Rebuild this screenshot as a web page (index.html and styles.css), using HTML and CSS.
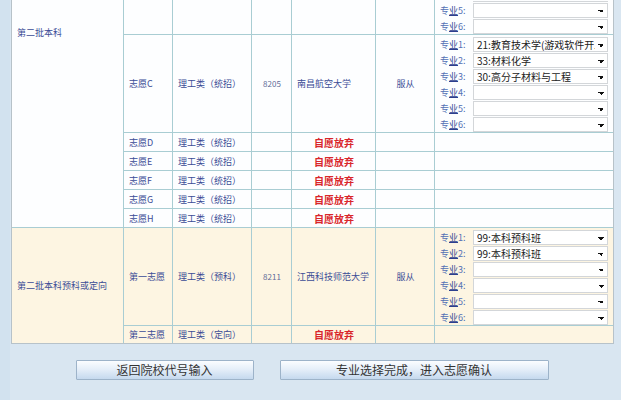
FILE: index.html
```html
<!DOCTYPE html>
<html lang="zh-CN">
<head>
    <meta charset="UTF-8">
    <meta name="viewport" content="width=device-width, initial-scale=1.0">
    <title>专业选择</title>
    <link rel="stylesheet" href="styles.css">
</head>
<body>
    <div class="page">
        <table class="grid">
            <colgroup>
                <col class="c-batch">
                <col class="c-pick">
                <col class="c-kind">
                <col class="c-code">
                <col class="c-school">
                <col class="c-obey">
                <col class="c-majors">
            </colgroup>
            <tr class="cut">
                <td class="batch top" rowspan="7">第二批本科</td>
                <td></td>
                <td></td>
                <td></td>
                <td></td>
                <td></td>
                <td class="majors">
                    <div class="clip">
                        <div class="major"><span class="tag">专<u>业</u>4:</span><select class="pick"><option></option></select></div>
                        <div class="major"><span class="tag">专<u>业</u>5:</span><select class="pick"><option></option></select></div>
                        <div class="major"><span class="tag">专<u>业</u>6:</span><select class="pick"><option></option></select></div>
                    </div>
                </td>
            </tr>
            <tr class="tall">
                <td>志愿C</td>
                <td>理工类（统招）</td>
                <td class="code">8205</td>
                <td>南昌航空大学</td>
                <td class="mid">服从</td>
                <td class="majors">
                    <div class="major"><span class="tag">专<u>业</u>1:</span><select class="pick"><option>21:教育技术学(游戏软件开发)</option></select></div>
                    <div class="major"><span class="tag">专<u>业</u>2:</span><select class="pick"><option>33:材料化学</option></select></div>
                    <div class="major"><span class="tag">专<u>业</u>3:</span><select class="pick"><option>30:高分子材料与工程</option></select></div>
                    <div class="major"><span class="tag">专<u>业</u>4:</span><select class="pick"><option></option></select></div>
                    <div class="major"><span class="tag">专<u>业</u>5:</span><select class="pick"><option></option></select></div>
                    <div class="major"><span class="tag">专<u>业</u>6:</span><select class="pick"><option></option></select></div>
                </td>
            </tr>
            <tr class="slim">
                <td>志愿D</td>
                <td>理工类（统招）</td>
                <td></td>
                <td class="mid"><span class="quit">自愿放弃</span></td>
                <td></td>
                <td></td>
            </tr>
            <tr class="slim">
                <td>志愿E</td>
                <td>理工类（统招）</td>
                <td></td>
                <td class="mid"><span class="quit">自愿放弃</span></td>
                <td></td>
                <td></td>
            </tr>
            <tr class="slim">
                <td>志愿F</td>
                <td>理工类（统招）</td>
                <td></td>
                <td class="mid"><span class="quit">自愿放弃</span></td>
                <td></td>
                <td></td>
            </tr>
            <tr class="slim">
                <td>志愿G</td>
                <td>理工类（统招）</td>
                <td></td>
                <td class="mid"><span class="quit">自愿放弃</span></td>
                <td></td>
                <td></td>
            </tr>
            <tr class="slim">
                <td>志愿H</td>
                <td>理工类（统招）</td>
                <td></td>
                <td class="mid"><span class="quit">自愿放弃</span></td>
                <td></td>
                <td></td>
            </tr>
            <tr class="tall cream">
                <td class="batch foot" rowspan="2">第二批本科预科或定向</td>
                <td>第一志愿</td>
                <td>理工类（预科）</td>
                <td class="code">8211</td>
                <td>江西科技师范大学</td>
                <td class="mid">服从</td>
                <td class="majors">
                    <div class="major"><span class="tag">专<u>业</u>1:</span><select class="pick"><option>99:本科预科班</option></select></div>
                    <div class="major"><span class="tag">专<u>业</u>2:</span><select class="pick"><option>99:本科预科班</option></select></div>
                    <div class="major"><span class="tag">专<u>业</u>3:</span><select class="pick"><option></option></select></div>
                    <div class="major"><span class="tag">专<u>业</u>4:</span><select class="pick"><option></option></select></div>
                    <div class="major"><span class="tag">专<u>业</u>5:</span><select class="pick"><option></option></select></div>
                    <div class="major"><span class="tag">专<u>业</u>6:</span><select class="pick"><option></option></select></div>
                </td>
            </tr>
            <tr class="slim cream">
                <td>第二志愿</td>
                <td>理工类（定向）</td>
                <td></td>
                <td class="mid"><span class="quit">自愿放弃</span></td>
                <td></td>
                <td></td>
            </tr>
        </table>

        <div class="actions">
            <button class="btn back">返回院校代号输入</button>
            <button class="btn next">专业选择完成，进入志愿确认</button>
        </div>
    </div>
</body>
</html>
```

FILE: styles.css
```css
:root {
    --page-bg: #d9e6f1;
    --line: #a9cdd3;
    --frame: #b7c2c9;
    --ink: #3b4c96;
    --cream: #fdf5e2;
    --red: #d9262b;
}
body {
    margin: 0;
    padding: 0;
    background-color: var(--page-bg);
    font-family: "Noto Sans CJK SC", "Liberation Sans", sans-serif;
}
.page {
    padding: 0 8px 0 11px;
    min-height: 400px;
    box-sizing: border-box;
    background: linear-gradient(to right, #d2e2ef 0, #d2e2ef 10px, var(--page-bg) 10px);
}
.grid {
    width: 602px;
    table-layout: fixed;
    border-collapse: separate;
    border-spacing: 0;
    border: 1px solid var(--frame);
    border-top: 0;
    background-color: #fdfeff;
    font-size: 9px;
    color: var(--ink);
}
.c-batch { width: 112px; }
.c-pick { width: 49px; }
.c-kind { width: 79px; }
.c-code { width: 40px; }
.c-school { width: 84px; }
.c-obey { width: 59px; }
.c-majors { width: 178px; }
.grid td {
    border-right: 1px solid var(--line);
    border-bottom: 1px solid var(--line);
    padding: 0 4px 0 5px;
    white-space: nowrap;
    overflow: hidden;
    box-sizing: border-box;
}
.grid td:last-child {
    border-right: 0;
}
.grid tr:last-child td,
.grid td.foot {
    border-bottom: 0;
}
.cut td { height: 35px; }
.tall td { height: 98px; }
.slim td { height: 19px; }
.grid tr:last-child td { height: 17px; }
.cream td {
    background-color: var(--cream);
}
.batch {
    padding-left: 6px;
}
.batch.top {
    vertical-align: top;
    padding-top: 26px;
}
.code {
    text-align: center;
    font-size: 8px;
    color: #5d6b98;
}
.mid {
    text-align: center;
}
.quit {
    color: var(--red);
    font-weight: bold;
    font-size: 10px;
}
.grid td.majors {
    padding: 1px 4px 0 5px;
    vertical-align: top;
}
.clip {
    height: 33px;
    overflow: hidden;
    display: flex;
    flex-direction: column;
    justify-content: flex-end;
}
.major {
    display: flex;
    align-items: center;
    height: 16px;
    flex-shrink: 0;
}
.tag {
    width: 33px;
    color: #5270b4;
}
.tag u {
    color: #2d3f8e;
}
.pick {
    -webkit-appearance: none;
    appearance: none;
    width: 135px;
    height: 15px;
    margin: 0;
    padding: 0 12px 0 3px;
    border: 1px solid #d3d6d9;
    border-radius: 0;
    background-color: #fff;
    font-family: "Noto Sans CJK SC", "Liberation Sans", sans-serif;
    font-size: 10px;
    line-height: 13px;
    color: #222;
    background-image: linear-gradient(45deg, transparent 50%, #111 50%), linear-gradient(-45deg, transparent 50%, #111 50%);
    background-size: 3px 3px, 3px 3px;
    background-position: 124px 6px, 127px 6px;
    background-repeat: no-repeat;
}
.actions {
    display: flex;
    justify-content: center;
    gap: 26px;
    padding-top: 16px;
}
.btn {
    height: 20px;
    padding: 0;
    border: 1px solid #9db3c9;
    border-radius: 1px;
    background: linear-gradient(to bottom, #fbfdff 0%, #e6eff9 45%, #c5d9ee 100%);
    font-family: "Noto Sans CJK SC", "Liberation Sans", sans-serif;
    font-size: 12px;
    line-height: 18px;
    color: #333;
    cursor: pointer;
}
.back { width: 178px; }
.next { width: 269px; }
```
